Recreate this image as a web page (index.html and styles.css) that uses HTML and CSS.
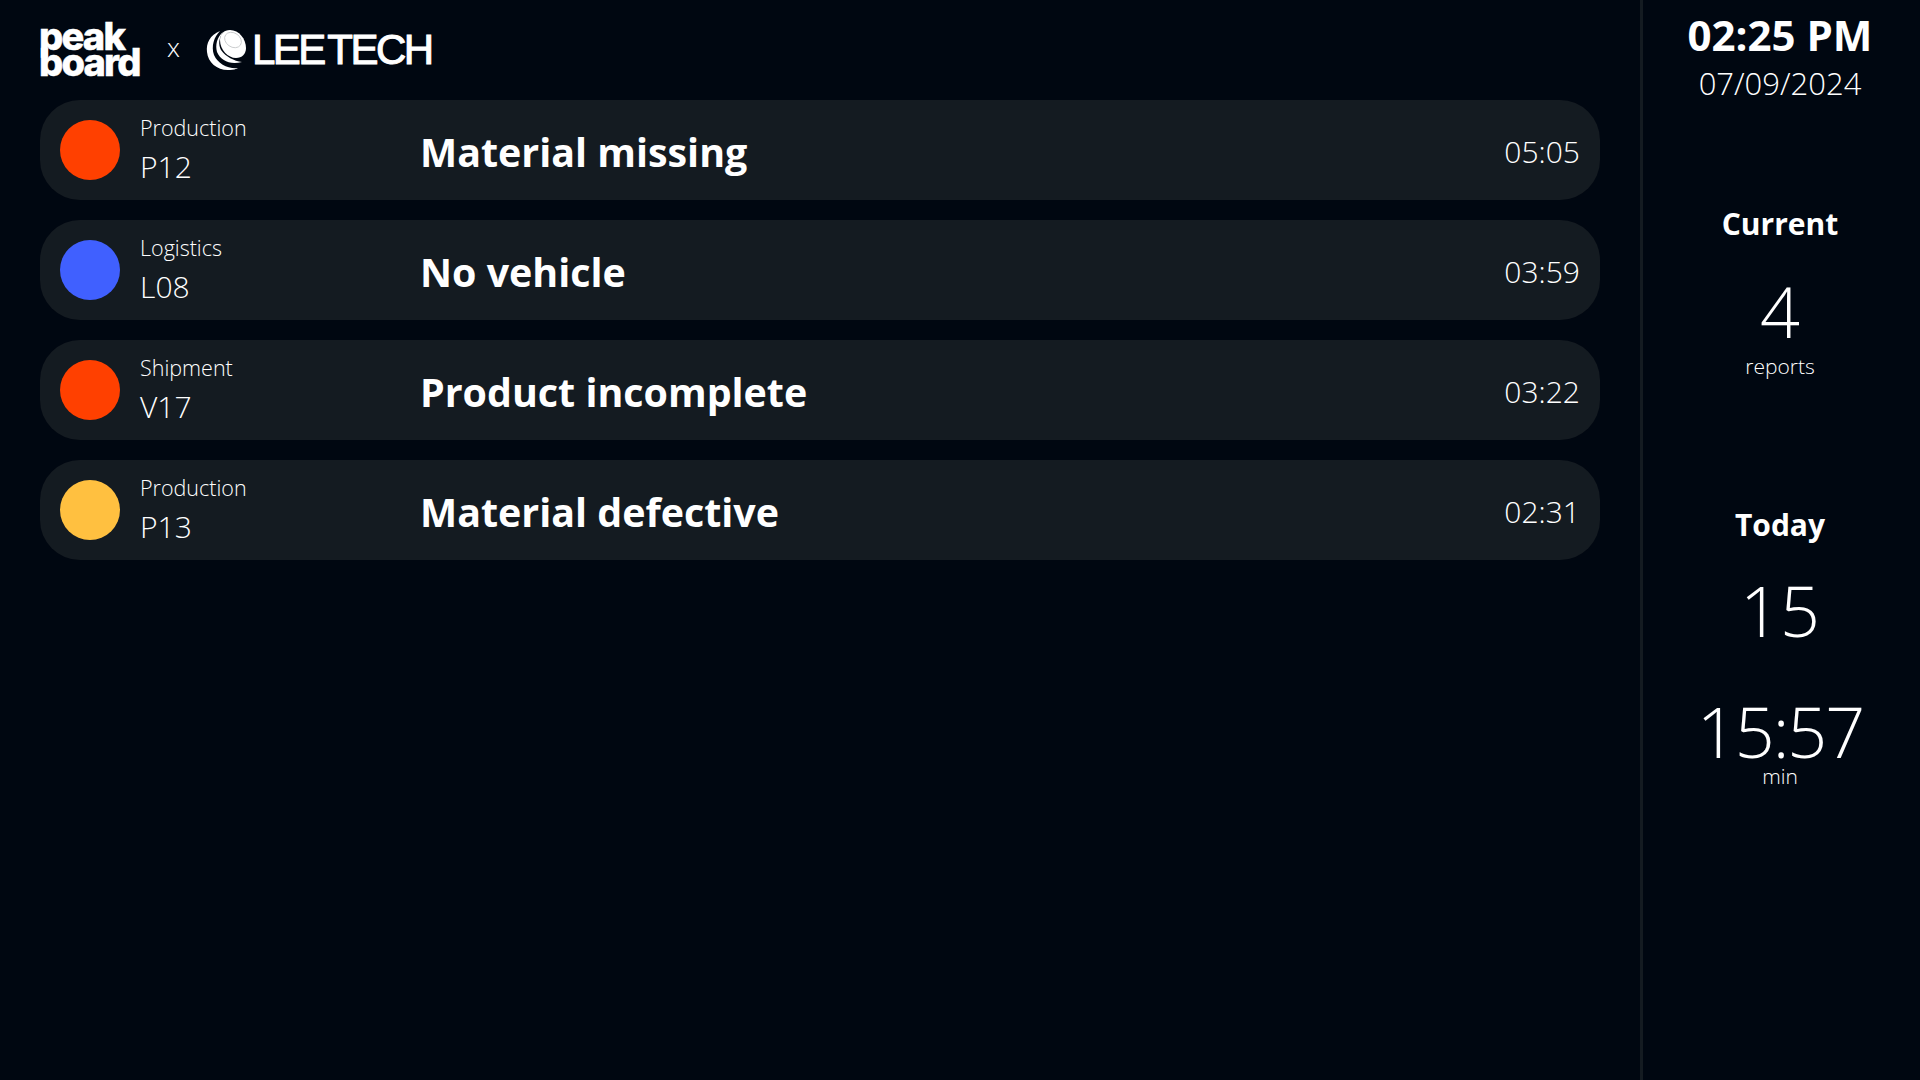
FILE: index.html
```html
<!DOCTYPE html>
<html lang="en">
<head>
<meta charset="UTF-8">
<meta name="viewport" content="width=device-width, initial-scale=1.0">
<title>Andon Board</title>
<link rel="stylesheet" href="styles.css">
</head>
<body>
<div class="board">
    <main class="content">
        <header class="logos">
            <div class="peakboard"><span>peak</span><span>board</span></div>
            <span class="times">x</span>
            <svg class="ball" viewBox="0 0 41 42" width="41" height="42">
                <path d="M14 1 C4 5 0 13 1 22 C2 33 12 41 24 40 C27 40 30 39 32 38 C22 39 12 34 8 25 C5 16 8 7 14 1 Z" fill="#fff"/>
                <path d="M17 2 C11 7 9 15 11 22 C15 31 24 35 36 32 C28 31 20 27 15 20 C12 14 13 8 17 2 Z" fill="#fff"/>
                <path d="M24 0 C33 0 40 9 40 18 C40 24 36 28 30 28 C22 28 14 20 14 10 C14 4 18 0 24 0 Z" fill="#fff"/>
                <ellipse cx="27" cy="10" rx="9" ry="7" transform="rotate(35 27 10)" fill="none" stroke="#c4c6c9" stroke-width="0.8"/>
            </svg>
            <div class="leetech">LEE TECH</div>
        </header>

        <section class="reports">
            <div class="report">
                <div class="dot dot-red"></div>
                <div class="place">
                    <div class="area">Production</div>
                    <div class="station">P12</div>
                </div>
                <div class="issue">Material missing</div>
                <div class="elapsed">05:05</div>
            </div>
            <div class="report">
                <div class="dot dot-blue"></div>
                <div class="place">
                    <div class="area">Logistics</div>
                    <div class="station">L08</div>
                </div>
                <div class="issue">No vehicle</div>
                <div class="elapsed">03:59</div>
            </div>
            <div class="report">
                <div class="dot dot-red"></div>
                <div class="place">
                    <div class="area">Shipment</div>
                    <div class="station">V17</div>
                </div>
                <div class="issue">Product incomplete</div>
                <div class="elapsed">03:22</div>
            </div>
            <div class="report">
                <div class="dot dot-yellow"></div>
                <div class="place">
                    <div class="area">Production</div>
                    <div class="station">P13</div>
                </div>
                <div class="issue">Material defective</div>
                <div class="elapsed">02:31</div>
            </div>
        </section>
    </main>

    <aside class="sidebar">
        <div class="clock">02:25 PM</div>
        <div class="date">07/09/2024</div>

        <h2 class="stat-title current-title">Current</h2>
        <div class="stat-value">4</div>
        <div class="stat-unit">reports</div>

        <h2 class="stat-title today-title">Today</h2>
        <div class="stat-value today-count">15</div>
        <div class="stat-value duration">15:57</div>
        <div class="stat-unit min-unit">min</div>
    </aside>
</div>
</body>
</html>
```

FILE: styles.css
```css
* {
    box-sizing: border-box;
}

body {
    margin: 0;
    height: 1080px;
    overflow: hidden;
    background-color: #000711;
    color: #fff;
    font-family: "Open Sans", "Noto Sans", sans-serif;
}

.board {
    display: flex;
    height: 100%;
}

.content {
    width: 1640px;
    padding: 0 40px;
}

.logos {
    display: flex;
    align-items: center;
    height: 100px;
}

.peakboard {
    display: flex;
    flex-direction: column;
    width: 102px;
    margin-top: -3px;
    margin-left: -1px;
    font-family: "Inter", sans-serif;
    font-weight: 800;
    font-size: 38px;
    line-height: 26px;
    letter-spacing: -1.8px;
    -webkit-text-stroke: 0.5px #fff;
}

.times {
    margin-left: 26px;
    margin-bottom: 6px;
    font-size: 26px;
    font-weight: 300;
}

.ball {
    margin-left: 26px;
    margin-top: 1px;
}

.leetech {
    margin-left: 5px;
    font-family: "Liberation Sans", sans-serif;
    font-size: 42px;
    letter-spacing: -2.5px;
    word-spacing: -5px;
    -webkit-text-stroke: 1px #fff;
}

.reports {
    display: flex;
    flex-direction: column;
    gap: 20px;
}

.report {
    display: flex;
    align-items: center;
    height: 100px;
    padding: 0 20px;
    background-color: #141b21;
    border-radius: 40px;
}

.dot {
    flex: none;
    width: 60px;
    height: 60px;
    border-radius: 50%;
}

.dot-red {
    background-color: #ff4000;
}

.dot-blue {
    background-color: #4060ff;
}

.dot-yellow {
    background-color: #ffc040;
}

.place {
    flex: none;
    width: 280px;
    margin-left: 20px;
    padding-top: 3px;
}

.area {
    margin-top: -3px;
    font-size: 21.5px;
    line-height: 30px;
    font-weight: 350;
}

.station {
    margin-top: 3px;
    font-size: 30px;
    line-height: 42px;
    font-weight: 350;
}

.issue {
    flex: 1;
    margin-top: 3px;
    font-size: 39.4px;
    font-weight: 700;
}

.elapsed {
    margin-top: 3px;
    font-size: 30px;
    font-weight: 350;
}

.sidebar {
    display: flex;
    flex-direction: column;
    align-items: center;
    width: 280px;
    padding-right: 3px;
    border-left: 3px solid #141b21;
}

.clock {
    margin-top: 10px;
    font-size: 42px;
    line-height: 50px;
    font-weight: 700;
}

.date {
    margin-top: 2px;
    font-size: 31px;
    line-height: 42px;
    font-weight: 350;
}

.stat-title {
    margin: 0;
    font-size: 30px;
    line-height: 42px;
    font-weight: 700;
}

.current-title {
    margin-top: 99px;
}

.today-title {
    margin-top: 123px;
}

.stat-value {
    margin-top: 26px;
    font-size: 70px;
    line-height: 80px;
    font-weight: 300;
}

.today-count {
    margin-top: 24px;
}

.duration {
    margin-top: 49px;
    line-height: 64px;
    letter-spacing: -2px;
}

.stat-unit {
    font-size: 21px;
    line-height: 30px;
    font-weight: 350;
}

.min-unit {
    margin-top: 1px;
    line-height: 24px;
}
```
